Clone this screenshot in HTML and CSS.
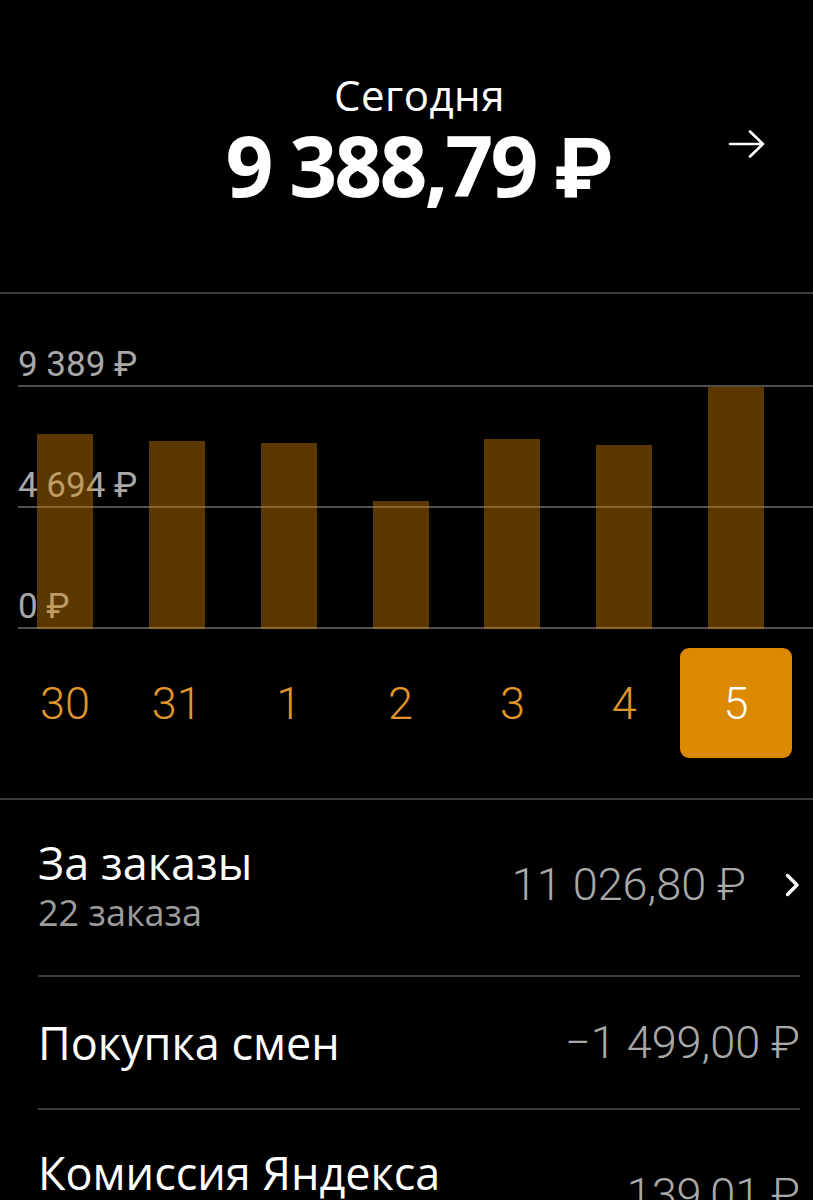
FILE: index.html
```html
<!DOCTYPE html>
<html lang="ru">
<head>
    <meta charset="UTF-8">
    <meta name="viewport" content="width=device-width, initial-scale=1.0">
    <title>Сегодня</title>
    <link rel="stylesheet" href="styles.css">
</head>
<body>

    <!-- Total for the day -->
    <div class="summary">
        <div class="summary-total">
            <div class="summary-label">Сегодня</div>
            <div class="summary-amount">9&nbsp;388,79&nbsp;<span class="rub">₽</span></div>
        </div>
        <a class="summary-next" href="#">
            <svg width="38" height="30" viewBox="0 0 38 30">
                <path d="M2 15 H35 M22 2.5 L35 15 L22 27.5" fill="none" stroke="#fff" stroke-width="2.6" stroke-linecap="round" stroke-linejoin="round"/>
            </svg>
        </a>
    </div>

    <!-- Chart -->
    <div class="chart">
        <div class="chart-axis">
            <div class="axis-row axis-row-top"><span>9&nbsp;389&nbsp;₽</span></div>
            <div class="axis-row"><span>4&nbsp;694&nbsp;₽</span></div>
            <div class="axis-row"><span>0&nbsp;₽</span></div>
        </div>
        <div class="chart-bars">
            <div class="bar-cell"><div class="bar" style="height: 80.2%"></div></div>
            <div class="bar-cell"><div class="bar" style="height: 77.4%"></div></div>
            <div class="bar-cell"><div class="bar" style="height: 76.5%"></div></div>
            <div class="bar-cell"><div class="bar" style="height: 52.7%"></div></div>
            <div class="bar-cell"><div class="bar" style="height: 78.2%"></div></div>
            <div class="bar-cell"><div class="bar" style="height: 75.7%"></div></div>
            <div class="bar-cell"><div class="bar" style="height: 99.6%"></div></div>
        </div>
    </div>

    <div class="days">
        <div class="day">30</div>
        <div class="day">31</div>
        <div class="day">1</div>
        <div class="day">2</div>
        <div class="day">3</div>
        <div class="day">4</div>
        <div class="day day-active">5</div>
    </div>

    <!-- Breakdown -->
    <div class="details">
        <div class="detail">
            <div class="detail-text">
                <div class="detail-title">За заказы</div>
                <div class="detail-sub">22 заказа</div>
            </div>
            <div class="detail-value">
                <span>11&nbsp;026,80&nbsp;₽</span>
                <svg class="chevron" width="16" height="24" viewBox="0 0 16 24">
                    <path d="M3.5 2.5 L13 12 L3.5 21.5" fill="none" stroke="#fff" stroke-width="3.4" stroke-linecap="round" stroke-linejoin="round"/>
                </svg>
            </div>
        </div>
        <div class="detail detail-single">
            <div class="detail-text">
                <div class="detail-title">Покупка смен</div>
            </div>
            <div class="detail-value">
                <span>−1&nbsp;499,00&nbsp;₽</span>
            </div>
        </div>
        <div class="detail detail-tall">
            <div class="detail-text">
                <div class="detail-title">Комиссия Яндекса</div>
            </div>
            <div class="detail-value">
                <span>139,01&nbsp;₽</span>
            </div>
        </div>
    </div>

</body>
</html>
```

FILE: styles.css
```css
body {
    margin: 0;
    background-color: #000;
    color: #fff;
    font-family: "Open Sans", "DejaVu Sans", sans-serif;
    width: 813px;
    overflow: hidden;
}
/* Header */
.summary {
    display: grid;
    grid-template-columns: 1fr auto 1fr;
    padding: 71px 0 0 26px;
    height: 221px;
    border-bottom: 2px solid #3c3c3c;
}
.summary-total {
    grid-column: 2;
    text-align: center;
}
.summary-label {
    font-size: 42px;
    line-height: 48px;
    letter-spacing: 0.5px;
}
.summary-amount {
    margin-top: 4px;
    font-size: 84px;
    line-height: 84px;
    font-weight: 700;
    letter-spacing: -3px;
}
.rub {
    font-family: Roboto, sans-serif;
    letter-spacing: 0;
}
.summary-next {
    grid-column: 3;
    justify-self: end;
    align-self: start;
    margin: 58px 47px 0 0;
    display: block;
}
/* Chart */
.chart {
    display: grid;
}
.chart-axis,
.chart-bars {
    grid-area: 1 / 1;
}
.chart-axis {
    margin-left: 18px;
}
.axis-row {
    box-sizing: border-box;
    height: 121px;
    display: flex;
    flex-direction: column;
    justify-content: flex-end;
    border-bottom: 2px solid #505050;
}
.axis-row-top {
    height: 93px;
}
.axis-row span {
    font-family: Roboto, sans-serif;
    font-size: 35px;
    line-height: 35px;
    color: #a8a8a8;
    margin-bottom: 3px;
}
.chart-bars {
    align-self: end;
    height: 243px;
    display: flex;
    padding: 0 21px 0 9px;
}
.bar-cell {
    flex: 1;
    display: flex;
    justify-content: center;
    align-items: flex-end;
}
.bar {
    width: 56px;
    background-color: rgba(218, 137, 0, 0.41);
}
/* Day switcher */
.days {
    display: flex;
    padding: 0 21px 0 9px;
    margin-top: 19px;
}
.day {
    flex: 1;
    height: 110px;
    display: flex;
    align-items: center;
    justify-content: center;
    font-family: Roboto, sans-serif;
    font-weight: 300;
    font-size: 45px;
    color: #e0962a;
    border-radius: 9px;
}
.day-active {
    background-color: #db8a00;
    color: #fff;
}
/* Rows */
.details {
    margin-top: 40px;
    border-top: 2px solid #3c3c3c;
}
.detail {
    display: flex;
    justify-content: space-between;
    align-items: center;
    margin: 0 13px 0 38px;
    padding: 35px 0 41px;
    border-bottom: 2px solid #3a3a3a;
}
.detail-single {
    padding: 38px 0;
}
.detail-tall {
    min-height: 99px;
}
.detail-tall .detail-text {
    align-self: flex-start;
}
.detail-title {
    font-size: 45px;
    line-height: 55px;
}
.detail-sub {
    margin-top: 2px;
    font-size: 36px;
    line-height: 42px;
    color: #9c9c9c;
}
.detail-value {
    display: flex;
    align-items: center;
    font-family: Roboto, sans-serif;
    font-weight: 300;
    font-size: 45px;
    color: #a9a9a9;
}
.chevron {
    margin-left: 38px;
}
```
